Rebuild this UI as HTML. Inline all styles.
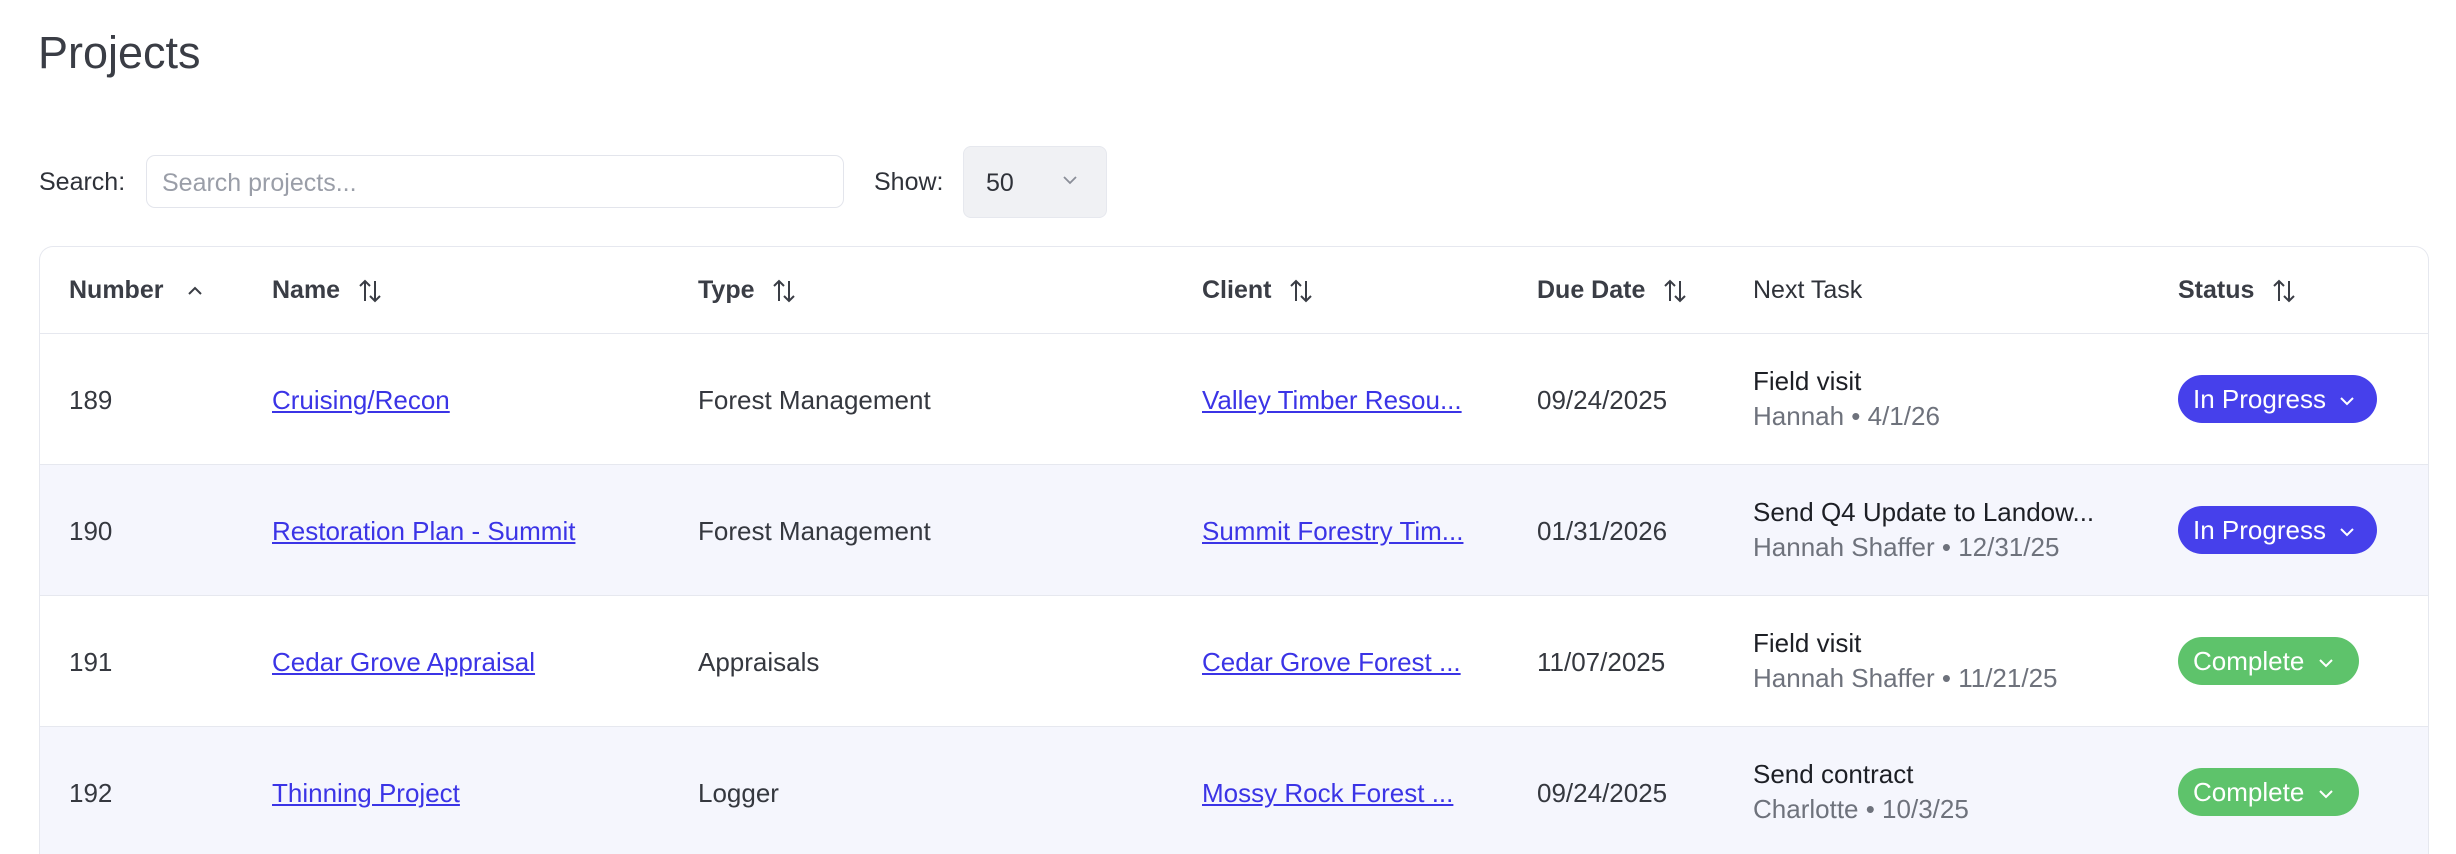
<!DOCTYPE html>
<html><head><meta charset="utf-8"><style>
*{box-sizing:border-box;margin:0;padding:0}
html,body{width:2456px;height:854px;overflow:hidden}
body{background:#fff;font-family:"Liberation Sans",sans-serif;color:#3a3d45;position:relative}
.a{position:absolute;white-space:nowrap}
h1{position:absolute;left:38px;top:27px;font-size:45px;font-weight:normal;color:#3a3d45}
.lbl{font-size:25px;color:#2f3239;top:168px}
.inp{left:146px;top:155px;width:698px;height:53px;border:1.5px solid #e3e5ec;border-radius:9px;font-size:25px;color:#9a9ea8;padding:13px 0 0 15px}
.sel{left:963px;top:146px;width:144px;height:72px;background:#f0f1f4;border:1.5px solid #e6e8ee;border-radius:8px;font-size:25px;color:#2f3239;padding:22px 0 0 22px}
.card{left:39px;top:246px;width:2390px;height:608px;border:1.5px solid #e6e8ef;border-bottom:none;border-radius:14px 14px 0 0;overflow:hidden}
.row{position:absolute;left:0;width:100%;border-top:1.5px solid #e6e8ef}
.h{font-size:25px;font-weight:bold;color:#3a3d45;top:30px}
.c{font-size:26px;color:#35383f}
.lnk{color:#3b34e6;text-decoration:underline}
.t1{font-size:26px;color:#1d1f25}
.t2{font-size:26px;color:#6e727c}
.pill{position:absolute;left:2138px;height:48px;border-radius:24px;color:#fff;font-size:26px;padding:9px 0 0 15px}
svg{vertical-align:middle}
</style></head><body>
<h1>Projects</h1>
<div class="a lbl" style="left:39px">Search:</div>
<div class="a inp">Search projects...</div>
<div class="a lbl" style="left:874px">Show:</div>
<div class="a sel">50<svg style="position:absolute;left:98px;top:28px" width="16" height="10" viewBox="0 0 16 10"><path d="M2 2l6 6 6-6" fill="none" stroke="#8a8e98" stroke-width="1.8"/></svg></div>
<div class="a card">
 <div class="a h" style="left:29px;top:29px">Number <svg width="22" height="20" viewBox="0 0 22 20" style="margin-left:14px"><path d="M5 13l6-6 6 6" fill="none" stroke="#3a3d45" stroke-width="2"/></svg></div>
 <div class="a h" style="left:232px;top:29px">Name <svg width="26" height="26" viewBox="0 0 26 26" style="margin-left:10px"><path d="M8 23V3M3 8l5-5 5 5M18 3v20M13 18l5 5 5-5" fill="none" stroke="#3a3d45" stroke-width="2"/></svg></div>
 <div class="a h" style="left:658px;top:29px">Type <svg width="26" height="26" viewBox="0 0 26 26" style="margin-left:10px"><path d="M8 23V3M3 8l5-5 5 5M18 3v20M13 18l5 5 5-5" fill="none" stroke="#3a3d45" stroke-width="2"/></svg></div>
 <div class="a h" style="left:1162px;top:29px">Client <svg width="26" height="26" viewBox="0 0 26 26" style="margin-left:10px"><path d="M8 23V3M3 8l5-5 5 5M18 3v20M13 18l5 5 5-5" fill="none" stroke="#3a3d45" stroke-width="2"/></svg></div>
 <div class="a h" style="left:1497px;top:29px">Due Date <svg width="26" height="26" viewBox="0 0 26 26" style="margin-left:10px"><path d="M8 23V3M3 8l5-5 5 5M18 3v20M13 18l5 5 5-5" fill="none" stroke="#3a3d45" stroke-width="2"/></svg></div>
 <div class="a h" style="left:1713px;top:29px;font-weight:normal;color:#2f3239">Next Task</div>
 <div class="a h" style="left:2138px;top:29px">Status <svg width="26" height="26" viewBox="0 0 26 26" style="margin-left:10px"><path d="M8 23V3M3 8l5-5 5 5M18 3v20M13 18l5 5 5-5" fill="none" stroke="#3a3d45" stroke-width="2"/></svg></div>

 <div class="row" style="top:86px;height:131px;background:#fff">
  <div class="a c" style="left:29px;top:51px">189</div>
  <div class="a c lnk" style="left:232px;top:51px">Cruising/Recon</div>
  <div class="a c" style="left:658px;top:51px">Forest Management</div>
  <div class="a c lnk" style="left:1162px;top:51px">Valley Timber Resou...</div>
  <div class="a c" style="left:1497px;top:51px">09/24/2025</div>
  <div class="a t1" style="left:1713px;top:32px">Field visit</div>
  <div class="a t2" style="left:1713px;top:67px">Hannah • 4/1/26</div>
  <div class="pill" style="top:41px;width:199px;background:#4640eb">In Progress <svg width="16" height="10" viewBox="0 0 16 10" style="margin-left:6px"><path d="M2 2l6 6 6-6" fill="none" stroke="#fff" stroke-width="2"/></svg></div>
 </div>
 <div class="row" style="top:217px;height:131px;background:#f5f6fd">
  <div class="a c" style="left:29px;top:51px">190</div>
  <div class="a c lnk" style="left:232px;top:51px">Restoration Plan - Summit</div>
  <div class="a c" style="left:658px;top:51px">Forest Management</div>
  <div class="a c lnk" style="left:1162px;top:51px">Summit Forestry Tim...</div>
  <div class="a c" style="left:1497px;top:51px">01/31/2026</div>
  <div class="a t1" style="left:1713px;top:32px">Send Q4 Update to Landow...</div>
  <div class="a t2" style="left:1713px;top:67px">Hannah Shaffer • 12/31/25</div>
  <div class="pill" style="top:41px;width:199px;background:#4640eb">In Progress <svg width="16" height="10" viewBox="0 0 16 10" style="margin-left:6px"><path d="M2 2l6 6 6-6" fill="none" stroke="#fff" stroke-width="2"/></svg></div>
 </div>
 <div class="row" style="top:348px;height:131px;background:#fff">
  <div class="a c" style="left:29px;top:51px">191</div>
  <div class="a c lnk" style="left:232px;top:51px">Cedar Grove Appraisal</div>
  <div class="a c" style="left:658px;top:51px">Appraisals</div>
  <div class="a c lnk" style="left:1162px;top:51px">Cedar Grove Forest ...</div>
  <div class="a c" style="left:1497px;top:51px">11/07/2025</div>
  <div class="a t1" style="left:1713px;top:32px">Field visit</div>
  <div class="a t2" style="left:1713px;top:67px">Hannah Shaffer • 11/21/25</div>
  <div class="pill" style="top:41px;width:181px;background:#5ec36b">Complete <svg width="16" height="10" viewBox="0 0 16 10" style="margin-left:6px"><path d="M2 2l6 6 6-6" fill="none" stroke="#fff" stroke-width="2"/></svg></div>
 </div>
 <div class="row" style="top:479px;height:129px;background:#f5f6fd">
  <div class="a c" style="left:29px;top:51px">192</div>
  <div class="a c lnk" style="left:232px;top:51px">Thinning Project</div>
  <div class="a c" style="left:658px;top:51px">Logger</div>
  <div class="a c lnk" style="left:1162px;top:51px">Mossy Rock Forest ...</div>
  <div class="a c" style="left:1497px;top:51px">09/24/2025</div>
  <div class="a t1" style="left:1713px;top:32px">Send contract</div>
  <div class="a t2" style="left:1713px;top:67px">Charlotte • 10/3/25</div>
  <div class="pill" style="top:41px;width:181px;background:#5ec36b">Complete <svg width="16" height="10" viewBox="0 0 16 10" style="margin-left:6px"><path d="M2 2l6 6 6-6" fill="none" stroke="#fff" stroke-width="2"/></svg></div>
 </div>
</div>
</body></html>
